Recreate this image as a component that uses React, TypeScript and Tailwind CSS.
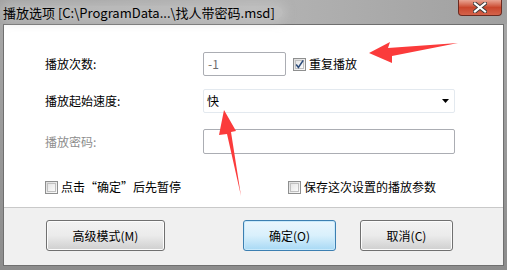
import React from "react";

// ── Small pieces ────────────────────────────────────────────────────────────

function CheckBox({ checked = false }: { checked?: boolean }) {
  return (
    <span className="inline-flex h-[13px] w-[13px] shrink-0 items-center justify-center border border-[#8e8f8f] bg-gradient-to-br from-[#dcdcdc] to-[#fbfbfb]">
      <span className="flex h-[9px] w-[9px] items-center justify-center border border-[#c0c0c0] bg-gradient-to-br from-[#e6e6e6] to-[#fafafa]">
        {checked && (
          <svg width="9" height="9" viewBox="0 0 9 9" className="overflow-visible">
            <path d="M1.2 4.6 L3.4 7.4 L8.2 0.4" fill="none" stroke="#2d4c7a" strokeWidth="1.6" />
          </svg>
        )}
      </span>
    </span>
  );
}

function Button({ children, focused = false }: { children: React.ReactNode; focused?: boolean }) {
  return (
    <div
      className={`flex h-[31px] items-center justify-center rounded-[3px] border text-[12px] text-black ${
        focused
          ? "w-[93px] border-[#3c7fb1] bg-gradient-to-b from-[#eaf6fd] via-[#d9f0fc] to-[#a7d9f5] shadow-[inset_0_0_0_1px_#c8e9fb]"
          : "w-[119px] border-[#707070] bg-gradient-to-b from-[#f2f2f2] via-[#ebebeb] to-[#cfcfcf] shadow-[inset_0_0_0_1px_#fcfcfc]"
      }`}
    >
      {children}
    </div>
  );
}

function Arrows() {
  return (
    <svg className="pointer-events-none absolute left-0 top-0" width="507" height="270">
      {/* arrow towards 重复播放 */}
      <polygon points="369,53 390,42 388,48 458,43 392,56 392,63" fill="#fb3b3b" />
      {/* arrow towards 快 */}
      <polygon points="224,110 236,131 231,132 241,196 227,134 219,135" fill="#fb3b3b" />
    </svg>
  );
}

// ── Main ────────────────────────────────────────────────────────────────────

export default function App() {
  return (
    <div
      className="relative h-[270px] w-[507px] overflow-hidden bg-gradient-to-b from-[#a9a9a9] to-[#8c8c8c]"
      style={{ fontFamily: '"Microsoft YaHei", "Noto Sans CJK SC", "Liberation Sans", sans-serif' }}
    >
      {/* title bar */}
      <div className="relative flex h-[24px] items-center bg-gradient-to-r from-[#a3a3a3] via-[#b4b4b4] to-[#a0a0a0] pl-[3px]">
        <span className="rounded-[10px] bg-[#c8c8c8]/50 pr-2 text-[13px] leading-none text-black shadow-[0_0_8px_4px_rgba(200,200,200,0.5)]">
          播放选项 [C:\ProgramData...\找人带密码.msd]
        </span>
        <div className="absolute right-[5px] top-0 flex h-[16px] w-[44px] items-center justify-center rounded-b-[4px] border border-t-0 border-[#6b2a20] bg-gradient-to-b from-[#e8a493] via-[#c9462c] to-[#d4624a]">
          <svg width="14" height="11" viewBox="0 0 14 11">
            <path d="M2 1.5 L12 9.5 M12 1.5 L2 9.5" stroke="#3a3a3a" strokeWidth="4" strokeLinecap="square" />
            <path d="M2 1.5 L12 9.5 M12 1.5 L2 9.5" stroke="#ffffff" strokeWidth="2.2" strokeLinecap="square" />
          </svg>
        </div>
      </div>

      {/* client area */}
      <div className="mx-[3px] flex h-[242px] flex-col border border-[#6f6f6f]">
        <div className="flex h-[182px] flex-col bg-white pl-[41px] pt-[27px] text-[12px] text-black">
          <div className="flex h-[24px] items-center">
            <span className="w-[158px]">播放次数:</span>
            <div className="flex h-[24px] w-[83px] items-center rounded-[2px] border border-[#abadb3] pl-[4px] text-[#6d6d6d]">
              -1
            </div>
            <span className="ml-[7px] flex items-center gap-[3px]">
              <CheckBox checked />
              重复播放
            </span>
          </div>

          <div className="mt-[13px] flex h-[24px] items-center">
            <span className="w-[158px]">播放起始速度:</span>
            <div className="flex h-[24px] w-[252px] items-center justify-between rounded-[2px] border border-[#e3e9ef] pl-[3px] pr-[5px]">
              <span>快</span>
              <svg width="7" height="4" viewBox="0 0 7 4">
                <path d="M0 0 H7 L3.5 4 Z" fill="#000" />
              </svg>
            </div>
          </div>

          <div className="mt-[16px] flex h-[25px] items-center">
            <span className="w-[158px] text-[#8d8d8d]">播放密码:</span>
            <div className="h-[25px] w-[252px] rounded-[2px] border border-[#abadb3]" />
          </div>

          <div className="mt-[24px] flex items-center">
            <span className="flex w-[243px] items-center gap-[3px]">
              <CheckBox />
              点击“确定”后先暂停
            </span>
            <span className="flex items-center gap-[3px]">
              <CheckBox />
              保存这次设置的播放参数
            </span>
          </div>
        </div>

        <div className="flex flex-1 items-start border-t border-[#c9c9c9] bg-[#f0f0f0] pl-[42px] pt-[12px]">
          <Button>高级模式(M)</Button>
          <div className="ml-[78px]">
            <Button focused>确定(O)</Button>
          </div>
          <div className="ml-[24px]">
            <div className="flex h-[31px] w-[93px] items-center justify-center rounded-[3px] border border-[#707070] bg-gradient-to-b from-[#f2f2f2] via-[#ebebeb] to-[#cfcfcf] text-[12px] text-black shadow-[inset_0_0_0_1px_#fcfcfc]">
              取消(C)
            </div>
          </div>
        </div>
      </div>

      <Arrows />
    </div>
  );
}
